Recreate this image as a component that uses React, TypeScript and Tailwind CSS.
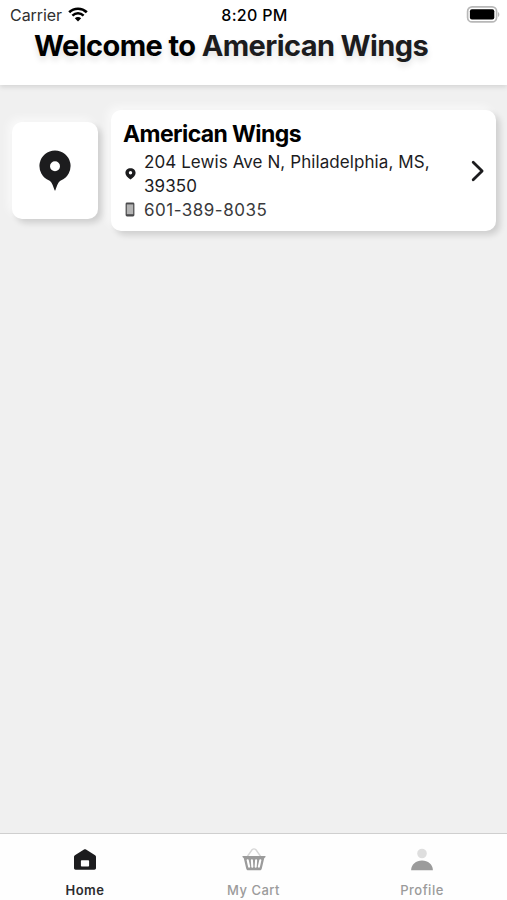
import { clsx } from "clsx";

type IconProps = { className?: string };

function WifiIcon() {
  return (
    <svg width="20" height="15" viewBox="0 0 20 15" fill="none" stroke="#000">
      <path d="M1.2 5.2C6.1 0.6 13.9 0.6 18.8 5.2" strokeWidth="2.7" />
      <path d="M4.4 8.6C7.6 5.6 12.4 5.6 15.6 8.6" strokeWidth="2.5" />
      <path d="M10 14.4L6.8 11.2C8.6 9.6 11.4 9.6 13.2 11.2Z" fill="#000" stroke="none" />
    </svg>
  );
}

function BatteryIcon() {
  return (
    <svg width="34" height="18" viewBox="0 0 34 18">
      <rect x="1.6" y="0.9" width="29" height="15" rx="4.5" fill="none" stroke="#b8b8b8" strokeWidth="1.7" />
      <rect x="3.9" y="3.2" width="24.4" height="10.4" rx="2" fill="#000" />
      <path d="M32 5.9c1.8.8 1.8 4.2 0 5z" fill="#b8b8b8" />
    </svg>
  );
}

function PinIcon({ className }: IconProps) {
  return (
    <svg className={className} viewBox="0 0 32 41" fill="#1c1c1e">
      <path
        fillRule="evenodd"
        d="M16 0.5a15.5 15.5 0 0 1 5.8 29.9C19.6 31.5 18.2 34.5 16.3 40.5h-.6C13.8 34.5 12.4 31.5 10.2 30.4A15.5 15.5 0 0 1 16 .5zM16 11.2a5 5 0 1 0 0 10 5 5 0 0 0 0-10z"
      />
    </svg>
  );
}

function SmallPinIcon() {
  return (
    <svg width="11" height="12" viewBox="0 0 11 12" fill="#1c1c1e">
      <path
        fillRule="evenodd"
        d="M5.5.3C8.5.3 10.6 2.3 10.6 4.9c0 2.5-2.3 4.6-5.1 6.6C2.7 9.5.4 7.4.4 4.9.4 2.3 2.5.3 5.5.3zm0 2.7a1.7 1.7 0 1 0 0 3.4 1.7 1.7 0 0 0 0-3.4z"
      />
    </svg>
  );
}

function PhoneIcon() {
  return (
    <svg width="10" height="15" viewBox="0 0 10 15">
      <rect x="0.6" y="0.6" width="8.8" height="13.8" rx="1.4" fill="#4a4a4c" />
      <rect x="1.8" y="2.4" width="6.4" height="9.8" fill="#b4b4b4" />
    </svg>
  );
}

function ChevronIcon() {
  return (
    <svg width="14" height="22" viewBox="0 0 14 22" fill="none" stroke="#1c1c1e" strokeWidth="2.8">
      <path d="M2.2 2.2L11.1 11L2.2 19.8" strokeLinecap="round" strokeLinejoin="round" />
    </svg>
  );
}

function HomeIcon() {
  return (
    <svg width="24" height="24" viewBox="0 0 24 24" fill="#1c1c1e">
      <path
        fillRule="evenodd"
        d="M12 1.3c.4 0 .7.1 1 .3l9.1 5.6c.6.4.9.8.9 1.5v11.300c0 1-.7 1.700-1.700 1.700H2.700c-1 0-1.700-.7-1.700-1.700V8.700c0-.7.3-1.100.9-1.500L11 1.600c.3-.2.6-.3 1-.3zM8.700 12.300c-.5 0-.8.3-.8.8v4.700c0 .5.3.8.8.8h6.600c.5 0 .8-.3.8-.8v-4.700c0-.5-.3-.8-.8-.8z"
      />
    </svg>
  );
}

function BasketIcon() {
  return (
    <svg width="24" height="24" viewBox="0 0 24 24">
      <path d="M5.3 8.5L10.2 1.5Q12 .2 13.8 1.5L18.7 8.5" fill="none" stroke="#d6d6d6" strokeWidth="1.4" />
      <path
        d="M.9 8h22.2c.4 0 .7.5.4 1l-1.300 1.300-2.400 10.100c-.3 1.300-1 1.900-2.200 1.900H6.400c-1.200 0-1.900-.6-2.200-1.900L1.800 10.300.5 9c-.3-.5 0-1 .4-1z"
        fill="#9b9b9b"
      />
      <path d="M5.7 12.3l1.4 6.300M9.900 12.300l.4 6.300M14.100 12.300l-.4 6.300M18.300 12.300l-1.400 6.300" stroke="#fefefe" strokeWidth="2.1" strokeLinecap="round" />
    </svg>
  );
}

function ProfileIcon() {
  return (
    <svg width="24" height="24" viewBox="0 0 24 24">
      <circle cx="12" cy="5.5" r="4.8" fill="#dedede" />
      <path d="M1.1 22.2C1.3 16.5 6 12.6 12 12.6s10.7 3.9 10.9 9.6z" fill="#9b9b9b" />
    </svg>
  );
}

const tabs = [
  { label: "Home", icon: HomeIcon, active: true },
  { label: "My Cart", icon: BasketIcon, active: false },
  { label: "Profile", icon: ProfileIcon, active: false },
];

const cardShadow = "shadow-[4px_4px_6px_rgba(0,0,0,0.14),-4px_-4px_8px_rgba(255,255,255,0.6)]";

function StatusBar() {
  return (
    <div className="grid h-[29px] grid-cols-3 items-center pl-[10px] pr-[7px] text-[16px]">
      <div className="flex items-center gap-[6px] text-[#303030]">
        <span className="tracking-[-0.05px]">Carrier</span>
        <WifiIcon />
      </div>
      <div className="pr-[1px] text-center font-medium tracking-[0.3px]">8:20 PM</div>
      <div className="flex justify-end">
        <BatteryIcon />
      </div>
    </div>
  );
}

function LocationRow() {
  return (
    <div className="flex items-center pl-[12px] pr-[11px] pt-[25px]">
      <div className={clsx("flex h-[97px] w-[86px] items-center justify-center rounded-[10px] bg-white", cardShadow)}>
        <PinIcon className="h-[41px] w-[32px]" />
      </div>
      <div className={clsx("ml-[13px] flex h-[121px] flex-1 items-center rounded-[10px] bg-white pl-[12px] pr-[11px] pt-[1px]", cardShadow)}>
        <div className="flex-1">
          <h2 className="whitespace-nowrap text-[23px] font-bold leading-[28px] tracking-[-0.6px]">American Wings</h2>
          <div className="mt-[2px] flex items-center text-[17px] leading-[24px] text-[#1c1c1e]">
            <span className="flex w-[21px] pl-[2px]">
              <SmallPinIcon />
            </span>
            <p className="whitespace-nowrap tracking-[0.08px]">
              204 Lewis Ave N, Philadelphia, MS,
              <br />
              39350
            </p>
          </div>
          <div className="flex items-center text-[17px] leading-[24px] text-[#3a3a3c]">
            <span className="flex w-[21px] pb-px pl-[2px]">
              <PhoneIcon />
            </span>
            <p className="tracking-[0.5px]">601-389-8035</p>
          </div>
        </div>
        <ChevronIcon />
      </div>
    </div>
  );
}

export default function App() {
  return (
    <div className="flex h-[900px] w-[507px] flex-col overflow-hidden bg-[#f0f0f0] font-['Inter','Liberation_Sans',sans-serif] text-black">
      <header className="h-[85px] bg-white shadow-[0_2px_5px_rgba(0,0,0,0.12)]">
        <StatusBar />
        <h1 className="whitespace-nowrap pl-[34px] text-[29px] font-bold leading-[34px] tracking-[-0.6px] [text-shadow:0_4px_6px_rgba(0,0,0,0.12)]">
          Welcome to <span className="text-[#1c1c1e]">American Wings</span>
        </h1>
      </header>
      <main className="flex-1">
        <LocationRow />
      </main>
      <nav className="grid h-[67px] grid-cols-[170px_167px_170px] border-t border-[#cfcfcf] bg-[#fefefe]">
        {tabs.map(({ label, icon: Icon, active }) => (
          <div key={label} className="flex flex-col items-center pt-[14px]">
            <Icon />
            <span
              className={clsx(
                "mt-[9px] text-[13px] leading-[18px]",
                active ? "font-semibold tracking-[0.45px] text-[#2c2c2e]" : "font-medium tracking-[0.5px] text-[#9b9b9b]",
              )}
            >
              {label}
            </span>
          </div>
        ))}
      </nav>
    </div>
  );
}
